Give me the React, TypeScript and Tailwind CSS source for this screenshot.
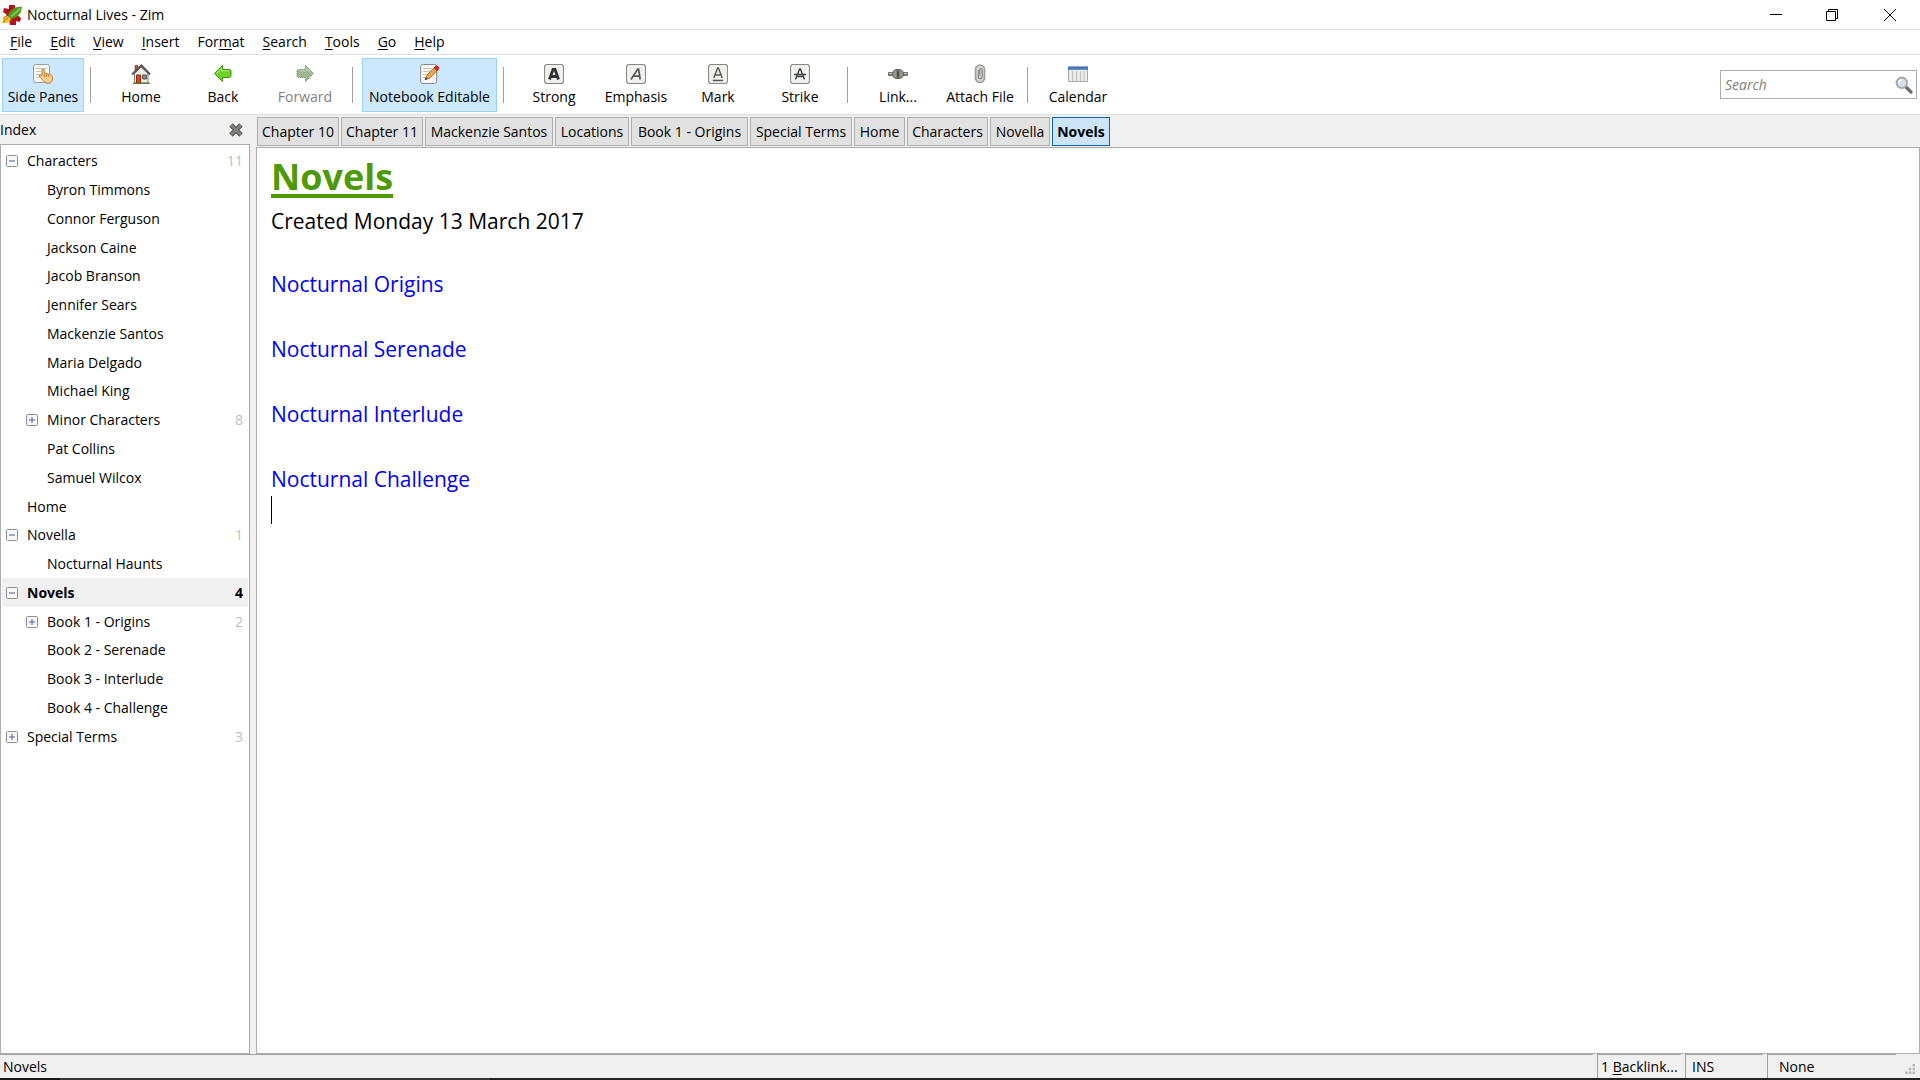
import { useState } from "react"
import type { ReactNode } from "react"
import clsx from "clsx"

interface TreeNode {
  name: string
  depth: 0 | 1
  count?: number
  state?: "open" | "closed"
}

const menus = [
  ["", "F", "ile"],
  ["", "E", "dit"],
  ["", "V", "iew"],
  ["", "I", "nsert"],
  ["For", "m", "at"],
  ["", "S", "earch"],
  ["", "T", "ools"],
  ["", "G", "o"],
  ["", "H", "elp"],
]

const tabs = [
  { name: "Chapter 10", width: "w-[82px]" },
  { name: "Chapter 11", width: "w-[82px]" },
  { name: "Mackenzie Santos", width: "w-[128px]" },
  { name: "Locations", width: "w-[74px]" },
  { name: "Book 1 - Origins", width: "w-[117px]" },
  { name: "Special Terms", width: "w-[102px]" },
  { name: "Home", width: "w-[51px]" },
  { name: "Characters", width: "w-[81px]" },
  { name: "Novella", width: "w-[60px]" },
  { name: "Novels", width: "w-[58px]" },
]

const tree: TreeNode[] = [
  { name: "Characters", depth: 0, count: 11, state: "open" },
  { name: "Byron Timmons", depth: 1 },
  { name: "Connor Ferguson", depth: 1 },
  { name: "Jackson Caine", depth: 1 },
  { name: "Jacob Branson", depth: 1 },
  { name: "Jennifer Sears", depth: 1 },
  { name: "Mackenzie Santos", depth: 1 },
  { name: "Maria Delgado", depth: 1 },
  { name: "Michael King", depth: 1 },
  { name: "Minor Characters", depth: 1, count: 8, state: "closed" },
  { name: "Pat Collins", depth: 1 },
  { name: "Samuel Wilcox", depth: 1 },
  { name: "Home", depth: 0 },
  { name: "Novella", depth: 0, count: 1, state: "open" },
  { name: "Nocturnal Haunts", depth: 1 },
  { name: "Novels", depth: 0, count: 4, state: "open" },
  { name: "Book 1 - Origins", depth: 1, count: 2, state: "closed" },
  { name: "Book 2 - Serenade", depth: 1 },
  { name: "Book 3 - Interlude", depth: 1 },
  { name: "Book 4 - Challenge", depth: 1 },
  { name: "Special Terms", depth: 0, count: 3, state: "closed" },
]

const links = ["Nocturnal Origins", "Nocturnal Serenade", "Nocturnal Interlude", "Nocturnal Challenge"]

function ZimLogo() {
  return (
    <svg viewBox="0 0 20 20" className="size-5">
      <path d="M7 0h6v4l5-1 1 4-4 3 4 3-1 4-4-1v4H8l-1-4-4 1-2-4 4-3-4-3 1-4 5 1z" fill="#b3141b" />
      <path d="M20 2C13 1 7 6 6 11l3 3c6-1 10-5 11-12z" fill="#4b9a1c" />
      <path d="M18.500 3.500 9 11.500" stroke="#83c94e" strokeWidth="1.800" />
      <path d="M6 11c-4 0-5 3-6 7 4 1 8 0 9-4z" fill="#f0c52c" />
      <path d="m1 17 5-4" stroke="#9a7409" />
    </svg>
  )
}

function SidePanesIcon() {
  return (
    <svg viewBox="0 0 20 20" className="size-5">
      <rect x=".5" y=".5" width="16" height="18" rx="2" fill="#f5f5f2" stroke="#9b9c98" />
      <path d="M3 4.500h11M3 7.500h5M3 10.500h5M3 13.500h4" stroke="#c8c8c5" />
      <path d="M8.500 14.500 6 12c0-1.500 1.500-1.500 3-.3V6c0-1.500 2.200-1.500 2.200 0v3.500c.6-.8 1.900-.6 2.200.3.800-.6 2-.3 2.200.5 1-.5 2.400-.2 2.400 1 .5 0 1.500.2 1.500 1.400V15c0 2.500-2 4.200-4.500 4.200-3 0-4.500-2-6.500-4.700z" fill="#f8cf94" stroke="#c17d2d" />
      <path d="M11.300 9.500V13M13.500 10v3M15.700 10.500V13" stroke="#c17d2d" />
    </svg>
  )
}

function HomeIcon() {
  return (
    <svg viewBox="0 0 20 20" className="size-5">
      <path d="M4 1.500h3v6H4z" fill="#c8532b" stroke="#7c3018" strokeWidth=".6" />
      <path d="M3.500 9.500 10 3l7 6.500V19h-13.500z" fill="#ededea" stroke="#7f817c" />
      <path d="M1 10.500 10.500 1.500l8.500 9" fill="none" stroke="#555753" strokeWidth="2" />
      <path d="M5.500 11h4v8h-4z" fill="#dd4c13" stroke="#8a2b06" />
      <path d="M11.500 11h4v4h-4z" fill="#7c8fa8" stroke="#555753" />
      <path d="M2 19.300h17" stroke="#4e7b2b" strokeWidth="1.200" />
    </svg>
  )
}

function ArrowIcon({ forward = false }: { forward?: boolean }) {
  return (
    <svg viewBox="0 0 20 20" className={clsx("size-5", forward && "-scale-x-100")}>
      <path
        d="M1.500 9.500 9.500 1.500v4h6.500c1.500 0 2 .7 2 2v4c0 1.300-.6 2-2 2h-6.500v4z"
        fill={forward ? "#9fb78e" : "#6fd02c"}
        stroke={forward ? "#7c936d" : "#3f9410"}
        strokeDasharray={forward ? "1.500 .7" : undefined}
      />
      <path d="M3.500 9.500 8.500 4.500v2.300H16" fill="none" stroke={forward ? "#c1d1b6" : "#b7ef88"} />
    </svg>
  )
}

function EditIcon() {
  return (
    <svg viewBox="0 0 20 20" className="size-5">
      <rect x=".7" y=".5" width="16" height="19" rx="2" fill="#f7f7f5" stroke="#888a85" />
      <path d="M3 4.500h9M3 7.500h7M3 10.500h4M3 13.500h3" stroke="#c4c4c1" />
      <path d="m5.500 15.500 1.200-4L14.500 3.500l3 2.800-8 8z" fill="#f0a548" stroke="#8f5902" strokeWidth=".8" />
      <path d="m14 3.800 1.800-1.800c1.400-.7 3.700 1.300 3 2.800L17 6.700z" fill="#dc2b25" stroke="#a40000" strokeWidth=".6" />
      <path d="m5 16 .7-2.400L7.600 15z" fill="#222" />
    </svg>
  )
}

function LetterIcon({ kind }: { kind: "strong" | "emphasis" | "mark" | "strike" }) {
  return (
    <svg viewBox="0 0 20 20" className="size-5">
      <rect x=".7" y=".7" width="18.600" height="18.600" rx="2" fill="#eeeeec" stroke="#888a85" strokeWidth="1.300" />
      <rect x="2" y="2" width="16" height="16" rx="1" fill="none" stroke="#fff" />
      {kind === "strong" && (
        <path d="M5.500 15.500 9 5.500h2l3.500 10M7 12.500h6" fill="none" stroke="#2e3436" strokeWidth="2.800" />
      )}
      {kind === "emphasis" && (
        <path d="M5 15.500 11.800 5h.8l1.600 10.500M7.500 12.200h6" fill="none" stroke="#555753" strokeWidth="1.700" />
      )}
      {kind === "mark" && (
        <path d="M5.800 14 9.600 4h.8l3.800 10M7 11h6M4.800 16.500h10.400" fill="none" stroke="#555753" strokeWidth="1.400" />
      )}
      {kind === "strike" && (
        <path d="M5.500 15.500 9.600 5h.8l4.100 10.500M7 12.500h6M4 10.500h12" fill="none" stroke="#3f4446" strokeWidth="1.400" />
      )}
    </svg>
  )
}

function LinkIcon() {
  return (
    <svg viewBox="0 0 20 20" className="size-5">
      <path d="M0 10h20" stroke="#777973" strokeWidth="4" />
      <path d="M1 9.500h4M15 9.500h4" stroke="#c2c3bf" />
      <path d="M9.200 5.500C6.500 5.500 4.500 7 4.500 10s2 4.500 4.700 4.500zM10.800 5.500c2.700 0 4.700 1.500 4.700 4.500s-2 4.500-4.700 4.500z" fill="#96988f" stroke="#5c5e59" />
      <path d="M10 5v10" stroke="#33342f" />
    </svg>
  )
}

function AttachIcon() {
  return (
    <svg viewBox="0 0 20 20" className="size-5">
      <rect x="5.500" y="1" width="9" height="17.500" rx="4.500" fill="#d4d5d2" stroke="#9b9d98" strokeWidth="1.600" />
      <path d="M8.300 6v6.500c0 2.800 3.800 2.800 3.800 0V6.500c0-2-2.300-2-2.300-.3v5.300" fill="none" stroke="#888a85" strokeWidth="1.200" />
    </svg>
  )
}

function CalendarIcon() {
  return (
    <svg viewBox="0 0 20 20" className="size-5">
      <path d="M.5 3h19v14.500H.5z" fill="#ebebe9" stroke="#a9aaa6" />
      <path d="M0 2.500h20v3.300H0z" fill="#4878b8" />
      <path d="M4.500 7v10M8.500 7v10M12.500 7v10M16 7v10" stroke="#c0c1be" />
    </svg>
  )
}

function SearchIcon() {
  return (
    <svg viewBox="0 0 18 18" className="size-[18px]">
      <path d="m11 11 5 5" stroke="#6c6e69" strokeWidth="3.200" strokeLinecap="round" />
      <circle cx="6.800" cy="6.800" r="5.300" fill="#d3dfeb" stroke="#a5a7a2" strokeWidth="1.800" />
      <path d="M4 7c0-2 1.300-3 3-3" fill="none" stroke="#fff" strokeWidth="1.200" />
    </svg>
  )
}

function ToolButton({ label, icon, active, disabled, wide }: {
  label: string
  icon: ReactNode
  active?: boolean
  disabled?: boolean
  wide?: boolean
}) {
  return (
    <button
      type="button"
      disabled={disabled}
      className={clsx(
        "flex h-[54px] shrink-0 flex-col items-center border pt-[5px] whitespace-nowrap",
        wide ? "w-[135px]" : "w-[82px]",
        active ? "border-[#99d1ff] bg-[#cce8ff]" : "border-transparent",
        disabled && "text-[#838383]",
      )}
    >
      {icon}
      <span className="mt-[3px] leading-5">{label}</span>
    </button>
  )
}

function Separator() {
  return (
    <div className="w-4 shrink-0 pl-[6px]">
      <div className="h-9 w-px bg-[#a0a0a0]" />
    </div>
  )
}

function Expander({ state }: { state: "open" | "closed" }) {
  return (
    <svg viewBox="0 0 12 12" className="size-3">
      <rect x=".5" y=".5" width="11" height="11" rx="1" fill="#f6f6f6" stroke="#919191" />
      <path d={state === "open" ? "M3 6h6" : "M3 6h6M6 3v6"} stroke="#4b63a7" />
    </svg>
  )
}

function TreeRow({ node, selected, onSelect }: { node: TreeNode; selected: boolean; onSelect: () => void }) {
  return (
    <li className={clsx("flex items-center pr-[5px] pl-1", selected && "bg-[#f0f0f0] font-bold")}>
      <span className={clsx("flex shrink-0", node.depth === 0 ? "w-[21px]" : "w-[41px] pl-5")}>
        {node.state && <Expander state={node.state} />}
      </span>
      <button type="button" onClick={onSelect} className="flex-1 text-left">{node.name}</button>
      {node.count !== undefined && (
        <span className={selected ? "text-black" : "text-[#bebebe]"}>{node.count}</span>
      )}
    </li>
  )
}

export default function App() {
  const [page, setPage] = useState("Novels")

  return (
    <div className="flex h-screen flex-col overflow-hidden bg-[#f0f0f0] font-['Open_Sans','Noto_Sans',sans-serif] text-[14px] leading-5 text-black">
      {/* Title bar */}
      <header className="flex h-[29px] shrink-0 items-center bg-white pl-[2px]">
        <ZimLogo />
        <h1 className="ml-[5px] flex-1">Nocturnal Lives - Zim</h1>
        <button type="button" aria-label="Minimize" className="flex h-full w-[56px] items-center justify-center">
          <svg viewBox="0 0 12 12" className="size-3"><path d="M0 5.500h12" stroke="#000" /></svg>
        </button>
        <button type="button" aria-label="Restore" className="flex h-full w-[56px] items-center justify-center">
          <svg viewBox="0 0 12 12" className="size-3" fill="none" stroke="#000">
            <path d="M.5 2.500h9v9h-9zM2.500 2.500v-2h9v9h-2" />
          </svg>
        </button>
        <button type="button" aria-label="Close" className="flex h-full w-[60px] items-center justify-center">
          <svg viewBox="0 0 12 12" className="size-3"><path d="m0 0 12 12M12 0 0 12" stroke="#000" /></svg>
        </button>
      </header>

      <nav className="flex h-[25px] shrink-0 items-center border-t border-[#dfdfdf] bg-white pl-px">
        {menus.map(([before, key, after]) => (
          <button key={before + key + after} type="button" className="px-[9px] whitespace-nowrap">
            {before}<span className="underline underline-offset-2">{key}</span>{after}
          </button>
        ))}
      </nav>

      {/* Toolbar */}
      <div className="flex h-[60px] shrink-0 items-center border-t border-[#dfdfdf] bg-white pr-[3px] pl-[2px]">
        <ToolButton label="Side Panes" icon={<SidePanesIcon />} active />
        <Separator />
        <ToolButton label="Home" icon={<HomeIcon />} />
        <ToolButton label="Back" icon={<ArrowIcon />} />
        <ToolButton label="Forward" icon={<ArrowIcon forward />} disabled />
        <Separator />
        <ToolButton label="Notebook Editable" icon={<EditIcon />} active wide />
        <Separator />
        <ToolButton label="Strong" icon={<LetterIcon kind="strong" />} />
        <ToolButton label="Emphasis" icon={<LetterIcon kind="emphasis" />} />
        <ToolButton label="Mark" icon={<LetterIcon kind="mark" />} />
        <ToolButton label="Strike" icon={<LetterIcon kind="strike" />} />
        <Separator />
        <ToolButton label="Link..." icon={<LinkIcon />} />
        <ToolButton label="Attach File" icon={<AttachIcon />} />
        <Separator />
        <ToolButton label="Calendar" icon={<CalendarIcon />} />
        <label className="ml-auto flex h-[29px] w-[197px] items-center border border-[#abadb3] pr-[3px] pl-1">
          <input
            type="search"
            placeholder="Search"
            aria-label="Search"
            className="min-w-0 flex-1 outline-none placeholder:text-[#808080] placeholder:italic"
          />
          <SearchIcon />
        </label>
      </div>

      <div className="flex min-h-0 flex-1 border-t border-[#dfdfdf]">
        {/* Index pane */}
        <aside className="flex w-[250px] shrink-0 flex-col">
          <div className="flex h-[29px] shrink-0 items-center justify-between pr-[6px]">
            <h2>Index</h2>
            <button type="button" aria-label="Close pane">
              <svg viewBox="0 0 16 16" className="size-4">
                <path d="m3 3 10 10M13 3 3 13" stroke="#5f615c" strokeWidth="5" />
                <path d="m3 3 10 10M13 3 3 13" stroke="#83857f" strokeWidth="2" />
              </svg>
            </button>
          </div>
          <div className="flex-1 border border-[#abadb3] bg-white px-px pt-[2px]">
            <ul className="grid h-[604px] auto-rows-fr">
              {tree.map((node) => (
                <TreeRow key={node.name} node={node} selected={node.name === page} onSelect={() => setPage(node.name)} />
              ))}
            </ul>
          </div>
        </aside>

        <main className="ml-[6px] flex min-w-0 flex-1 flex-col">
          <div className="flex h-8 shrink-0 gap-[2px] pt-[2px] pl-px">
            {tabs.map(({ name, width }) => (
              <button
                key={name}
                type="button"
                onClick={() => setPage(name)}
                className={clsx(
                  "flex h-[29px] shrink-0 items-center justify-center border whitespace-nowrap",
                  width,
                  name === page ? "border-[#0a64ad] bg-[#cce4f7] font-bold" : "border-[#adadad] bg-[#e1e1e1]",
                )}
              >
                {name}
              </button>
            ))}
          </div>
          <article className="flex-1 border border-[#abadb3] bg-white pl-[14px] text-[21px] leading-[33px]">
            <h2 className="text-[36px] leading-[58px] font-bold text-[#4e9a06] underline decoration-4 underline-offset-4">
              Novels
            </h2>
            <p className="leading-[30px]">Created Monday 13 March 2017</p>
            {links.map((link) => (
              <p key={link} className="pt-8">
                <a href="#" className="text-[#0000ff]">{link}</a>
              </p>
            ))}
            <div className="h-7 w-px bg-black" />
          </article>
        </main>
      </div>

      <footer className="flex h-6 shrink-0 gap-1">
        <div className="flex flex-1 items-center border-t border-[#a0a0a0] pt-px pl-[3px]">{page}</div>
        <button type="button" className="flex w-[84px] items-center border-t border-l border-[#a0a0a0] pt-px pl-[3px] whitespace-nowrap">
          1&nbsp;<span className="underline underline-offset-2">B</span>acklink...
        </button>
        <div className="flex w-[78px] items-center border-t border-l border-[#a0a0a0] pt-px pl-[6px]">INS</div>
        <div className="flex w-[129px] items-center border-t border-l border-[#a0a0a0] pt-px pl-[11px]">None</div>
        <svg viewBox="0 0 12 12" className="mr-[5px] mb-1 ml-[5px] size-[10px] self-end" fill="#b8b8b8">
          <path d="M9 0h3v3H9zM4.500 4.500h3v3h-3zM9 4.500h3v3H9zM0 9h3v3H0zM4.500 9h3v3h-3zM9 9h3v3H9z" />
        </svg>
      </footer>
      <div className="flex h-[2px] shrink-0 bg-[#222]">
        <div className="w-[60px] bg-[#161616]" />
        <div className="w-[430px] bg-[#363636]" />
      </div>
    </div>
  )
}
